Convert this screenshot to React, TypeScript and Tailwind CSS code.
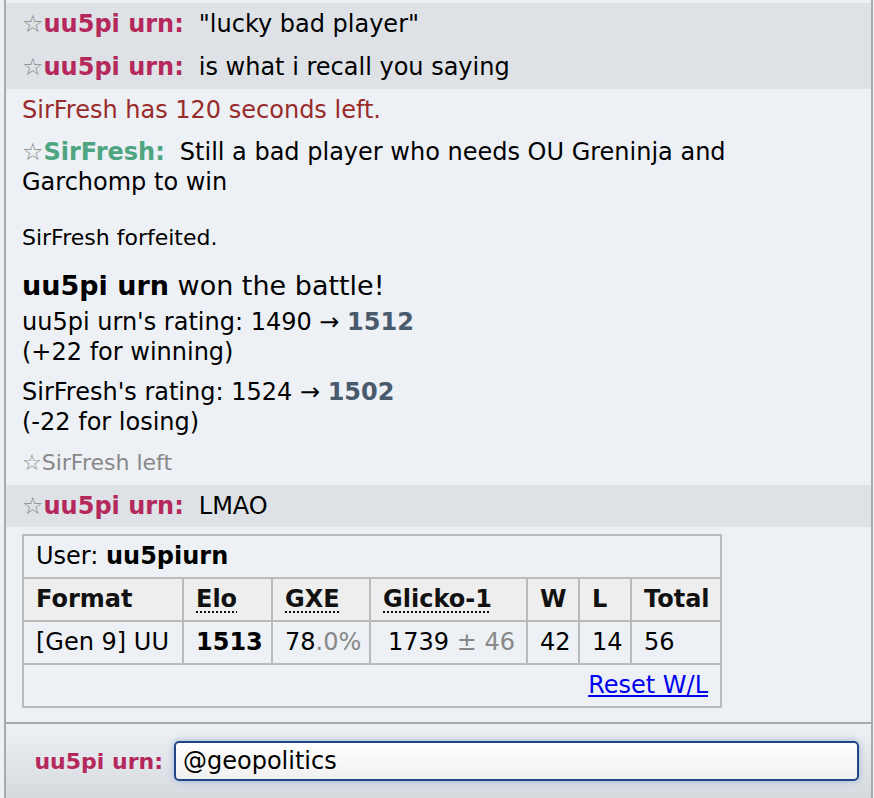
import React from 'react'

const Star = () => <span className="text-[#888]">☆</span>

function Chat({ name, color, children }: { name: string; color: string; children: React.ReactNode }) {
  return (
    <div className="px-4 py-[6px] leading-[31px] text-[24px]">
      <Star />
      <strong className={color}>{name}:</strong>
      <span className="ml-[15px]">{children}</span>
    </div>
  )
}

const cell = 'border-2 border-[#bbb] px-3 py-[5px]'

export default function App() {
  return (
    <div className="h-screen bg-[#edf1f5] pl-1 text-black font-['DejaVu_Sans',Verdana,sans-serif] overflow-hidden">
      <div className="h-full flex flex-col border-l-2 border-r-2 border-[#aaa] mr-[1px]">
        {/* Log */}
        <div className="flex-1 overflow-hidden pt-[3px]">
          <div className="bg-[#dee2e6]">
            <Chat name="uu5pi urn" color="text-[#b5285c]">"lucky bad player"</Chat>
            <Chat name="uu5pi urn" color="text-[#b5285c]">is what i recall you saying</Chat>
          </div>
          <div className="px-4 py-[6px] leading-[31px] text-[24px] text-[#9a2b2b]">
            SirFresh has 120 seconds left.
          </div>
          <div className="px-4 py-[5px] leading-[30px] text-[24px]">
            <Star />
            <strong className="text-[#4ea580]">SirFresh:</strong>
            <span className="ml-[15px]">Still a bad player who needs OU Greninja and Garchomp to win</span>
          </div>
          <div className="px-4 mt-[22px] leading-[27px] text-[22px]">SirFresh forfeited.</div>
          <div className="px-4 mt-[18px] leading-[34px] text-[27px]">
            <strong>uu5pi urn</strong> won the battle!
          </div>
          <div className="px-4 mt-[4px] leading-[30px] text-[24px]">
            uu5pi urn's rating: 1490 → <strong className="text-[#4a5a6d]">1512</strong>
            <br />
            (+22 for winning)
          </div>
          <div className="px-4 mt-[10px] leading-[30px] text-[24px]">
            SirFresh's rating: 1524 → <strong className="text-[#4a5a6d]">1502</strong>
            <br />
            (-22 for losing)
          </div>
          <div className="px-4 mt-[11px] leading-[30px] text-[22px] text-[#888]">☆SirFresh left</div>
          <div className="bg-[#dee2e6] mt-[7px]">
            <div className="px-4 py-[6px] leading-[30px] text-[24px]">
              <Star />
              <strong className="text-[#b5285c]">uu5pi urn:</strong>
              <span className="ml-[15px]">LMAO</span>
            </div>
          </div>
          <div className="px-4 pt-[7px]">
            <table className="w-[700px] table-fixed border-collapse border-2 border-[#bbb] text-[24px] leading-[31px]">
              <colgroup>
                <col className="w-[160px]" />
                <col className="w-[89px]" />
                <col className="w-[98px]" />
                <col className="w-[157px]" />
                <col className="w-[52px]" />
                <col className="w-[52px]" />
                <col />
              </colgroup>
              <tbody>
                <tr>
                  <td colSpan={7} className={cell}>
                    User: <strong>uu5piurn</strong>
                  </td>
                </tr>
                <tr className="bg-[#eeeeee] font-bold text-[#111]">
                  <th className={`${cell} text-left`}>Format</th>
                  <th className={`${cell} text-left`}>
                    <span className="underline decoration-dotted decoration-2 underline-offset-4">Elo</span>
                  </th>
                  <th className={`${cell} text-left`}>
                    <span className="underline decoration-dotted decoration-2 underline-offset-4">GXE</span>
                  </th>
                  <th className={`${cell} text-left`}>
                    <span className="underline decoration-dotted decoration-2 underline-offset-4">Glicko-1</span>
                  </th>
                  <th className={`${cell} text-left`}>W</th>
                  <th className={`${cell} text-left`}>L</th>
                  <th className={`${cell} text-left`}>Total</th>
                </tr>
                <tr>
                  <td className={`${cell} whitespace-nowrap`}>[Gen 9] UU</td>
                  <td className={cell}><strong>1513</strong></td>
                  <td className={`${cell} whitespace-nowrap`}>
                    78<span className="text-[#888]">.0%</span>
                  </td>
                  <td className="border-2 border-[#bbb] pl-[17px] pr-1 py-[5px] whitespace-nowrap">
                    1739 <span className="text-[#888]">± 46</span>
                  </td>
                  <td className={cell}>42</td>
                  <td className={cell}>14</td>
                  <td className={cell}>56</td>
                </tr>
                <tr>
                  <td colSpan={7} className={`${cell} text-right`}>
                    <a href="#" className="text-[#0000ee] underline">Reset W/L</a>
                  </td>
                </tr>
              </tbody>
            </table>
          </div>
        </div>

        {/* Input */}
        <div className="h-[76px] shrink-0 border-t-2 border-[#aaa] bg-gradient-to-b from-[#eef1f4] to-[#d6dadf] flex items-center pr-[12px]">
          <label className="w-[158px] shrink-0 text-right text-[22px] font-bold text-[#b5285c] pr-[1px]">
            uu5pi urn:
          </label>
          <div className="ml-[10px] flex-1 h-[40px] rounded-[5px] border-2 border-[#1f4685] bg-gradient-to-b from-white to-[#f0f0f0] shadow-[0_0_7px_#9db3d6] flex items-center px-[7px] text-[24px]">
            @geopolitics
          </div>
        </div>
      </div>
    </div>
  )
}
